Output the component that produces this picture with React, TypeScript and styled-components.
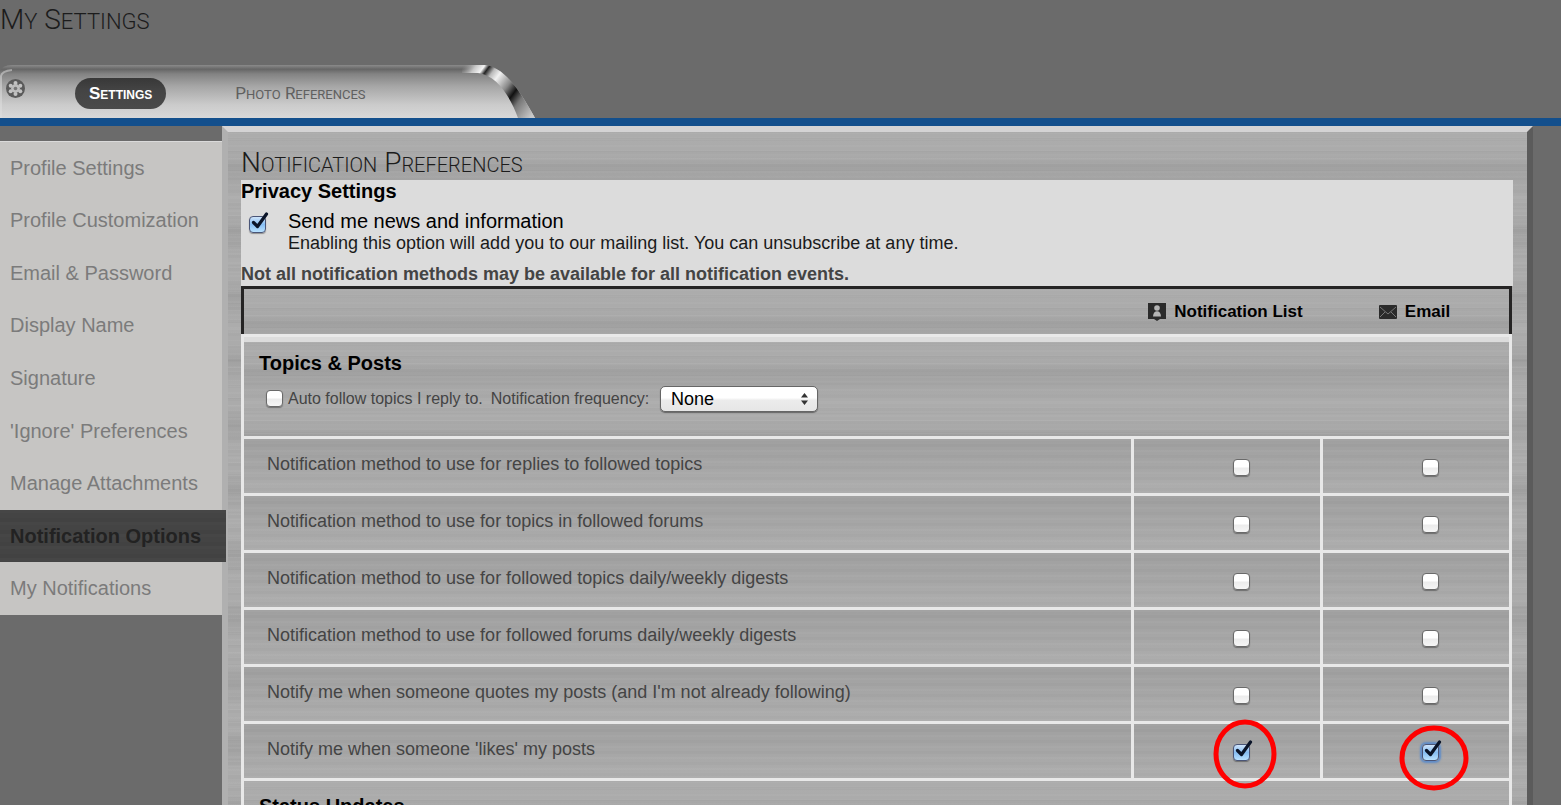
import React from 'react';
import styled, { createGlobalStyle, css } from 'styled-components';

const GlobalStyle = createGlobalStyle`
  *, *::before, *::after { box-sizing: border-box; }
  html, body { margin: 0; height: 100%; overflow: hidden; }
  body { background: #6b6b6b; font-family: "Liberation Sans", Arial, sans-serif; color: #444; }
  h1, h2, h3, p { margin: 0; }
`;

const brushed = css`
  background-color: #a8a8a8;
  background-image:
    repeating-linear-gradient(180deg, rgba(255,255,255,0.03) 0 2px, transparent 2px 5px, rgba(255,255,255,0.02) 5px 6px, rgba(0,0,0,0.02) 6px 9px, transparent 9px 13px),
    repeating-linear-gradient(180deg, rgba(0,0,0,0.02) 0 1px, transparent 1px 7px, rgba(255,255,255,0.04) 7px 8px, transparent 8px 19px),
    repeating-linear-gradient(180deg, rgba(255,255,255,0.05) 0, rgba(255,255,255,0.03) 22px, rgba(0,0,0,0.04) 36px, rgba(255,255,255,0.05) 64px);
`;

const rowBrushed = css`
  background-color: #a8a8a8;
  background-image:
    repeating-linear-gradient(180deg, rgba(255,255,255,0.03) 0 2px, transparent 2px 5px, rgba(0,0,0,0.02) 5px 8px, transparent 8px 11px),
    linear-gradient(180deg, rgba(0,0,0,0.05), rgba(0,0,0,0.01) 50%, rgba(255,255,255,0.07));
`;

const Page = styled.div`
  min-height: 100vh;
`;

const PageHeader = styled.header`
  height: 65px;
`;

const lightCaps = css`
  font-family: Roboto, "Liberation Sans", sans-serif;
  font-weight: 300;
  text-transform: uppercase;
`;

const SmallLetters = styled.span<{ $size: number }>`
  font-size: ${p => p.$size}px;
  line-height: 1;
`;

function Caps({ text, small }: { text: string; small: number }) {
  return (
    <>
      {text.split(' ').map((word, i) => (
        <React.Fragment key={word}>
          {i > 0 && ' '}
          {word[0]}<SmallLetters $size={small}>{word.slice(1)}</SmallLetters>
        </React.Fragment>
      ))}
    </>
  );
}

const PageTitle = styled.h1`
  ${lightCaps}
  font-size: 28px;
  line-height: 40px;
  color: #1c1c1c;
`;

const TabBar = styled.nav`
  position: relative;
  display: flex;
  align-items: center;
  height: 61px;
  padding: 4px 0 0 5px;
  border-bottom: 8px solid #134f8c;
`;

const TabPlate = styled.svg`
  position: absolute;
  left: 0;
  bottom: 0;
`;

const Emblem = styled.svg`
  position: relative;
  margin: 0 49px 11px 0;
`;

const Tab = styled.a<{ $active?: boolean }>`
  position: relative;
  height: 31px;
  padding: 0 14px;
  border-radius: 16px;
  font-size: 17px;
  line-height: 31px;
  margin-right: 55px;
  text-decoration: none;
  ${p => p.$active ? css`
    color: #fff;
    font-weight: 700;
    font-variant: small-caps;
    background: linear-gradient(#383838, #444 40%, #4a4a4a);
  ` : css`
    ${lightCaps}
    font-weight: 400;
    color: #606060;
  `}
`;

const Body = styled.div`
  display: flex;
  align-items: flex-start;
  padding-right: 28px;
`;

const SideMenu = styled.nav`
  flex: 0 0 222px;
  display: grid;
  grid-auto-rows: 1fr;
  height: 474px;
  margin-top: 15px;
  background: #c6c5c3;
  border-top: 1px solid #dadada;
  position: relative;
`;

const SideLink = styled.a<{ $active?: boolean }>`
  display: flex;
  align-items: center;
  padding: 0 0 0 10px;
  font-size: 20px;
  text-decoration: none;
  color: #7b7b7b;
  ${p => p.$active && css`
    margin-right: -4px;
    color: #222;
    font-weight: 700;
    background: repeating-linear-gradient(#464646 0 3px, #444 3px 8px, #424242 8px 12px);
  `}
`;

const Panel = styled.main`
  flex: 1;
  border: 6px solid;
  border-color: #d4d3d4 #5b5b5b #5b5b5b #b0b0b0;
  padding: 14px 14px 14px 13px;
  min-height: 100vh;
  ${brushed}
`;

const PanelTitle = styled.h2`
  ${lightCaps}
  font-size: 28px;
  line-height: 34px;
  color: #1c1c1c;
`;

const Privacy = styled.section`
  height: 106px;
  background: #dcdcdc;
`;

const PrivacyTitle = styled.h3`
  font-size: 20px;
  line-height: 22px;
  color: #000;
`;

const NewsOption = styled.div`
  display: flex;
  align-items: center;
  padding: 8px 0 0 8px;
`;

const NewsText = styled.div`
  padding-left: 21px;
  font-size: 18px;
  line-height: 22px;
  color: #1a1a1a;
`;

const NewsLabel = styled.label`
  display: block;
  font-size: 20px;
  color: #000;
`;

const NewsCheck = styled.div`
  align-self: flex-start;
  padding-top: 5px;
`;

const Notice = styled.p`
  padding-top: 10px;
  font-size: 18px;
  line-height: 20px;
  font-weight: 700;
  color: #444;
`;

const OptionTable = styled.table`
  width: calc(100% - 1px);
  table-layout: fixed;
  border-collapse: separate;
  border-spacing: 0;
`;

const LabelCol = styled.col``;
const ListCol = styled.col`width: 189px;`;
const EmailCol = styled.col`width: 192px;`;

const HeadCell = styled.th`
  height: 48px;
  padding: 0;
  border-top: 3px solid #252424;
  font-size: 17px;
  color: #000;
  ${brushed}
  &:first-child { border-left: 3px solid #252424; }
  &:last-child { border-right: 3px solid #252424; }
`;

const HeadLabel = styled.span`
  display: flex;
  align-items: center;
  justify-content: center;
  gap: 8px;
`;

const SectionCell = styled.td<{ $first?: boolean }>`
  height: ${p => (p.$first ? 105 : 97)}px;
  padding: ${p => (p.$first ? 15 : 14)}px 15px 0;
  vertical-align: top;
  border: 3px solid #e8e8e8;
  border-top-width: ${p => (p.$first ? 3 : 0)}px;
  ${brushed}
  ${p => p.$first && 'box-shadow: inset 0 5px #dcdcdc;'}
`;

const SectionTitle = styled.h3`
  font-size: 20px;
  line-height: 22px;
  color: #000;
`;

const AutoFollow = styled.div`
  display: flex;
  align-items: center;
  padding: 12px 0 0 7px;
  font-size: 16px;
  color: #444;
`;

const FollowLabel = styled.label`
  margin: 0 8px 0 4px;
`;

const FrequencyBox = styled.span`
  position: relative;
  margin-left: 11px;
`;

const Frequency = styled.select`
  appearance: none;
  display: block;
  width: 158px;
  height: 26px;
  padding: 0 10px;
  border: 1px solid #666;
  border-radius: 5px;
  background: linear-gradient(#fff 0 45%, #ececec 55%, #e6e6e6);
  box-shadow: 0 1px 1px rgba(0,0,0,0.4);
  font: 18px "Liberation Sans", sans-serif;
  color: #000;
`;

const Arrows = styled.svg`
  position: absolute;
  right: 10px;
  top: 7px;
  pointer-events: none;
`;

const RowLabel = styled.th`
  height: 57px;
  padding: 0 0 3px 23px;
  border: solid #e8e8e8;
  border-width: 0 0 3px 3px;
  text-align: left;
  font-size: 18px;
  font-weight: 400;
  color: #444;
  ${rowBrushed}
`;

const CheckCell = styled.td`
  padding: 4px 0 0 30px;
  border: solid #e8e8e8;
  border-width: 0 0 3px 3px;
  text-align: center;
  ${rowBrushed}
  &:last-child { border-right-width: 3px; }
`;

const CheckWrap = styled.span`
  position: relative;
  display: inline-block;
  vertical-align: middle;
  width: 18px;
  height: 18px;
`;

const CheckInput = styled.input<{ $glow?: boolean }>`
  appearance: none;
  display: block;
  width: 17px;
  height: 17px;
  margin: 0;
  border: 1px solid #6a6a6a;
  border-radius: 4px;
  background: linear-gradient(#fff, #fff 45%, #ececec 55%, #f6f6f6);
  box-shadow: 0 1px 1px rgba(0,0,0,0.35);
  &:checked {
    border-color: #4a5577;
    background: linear-gradient(#cfe4fa, #86bdf2 50%, #b9e2ff);
  }
  ${p => p.$glow && css`box-shadow: 0 0 2px 2px #5e8cc9;`}
  &:checked + svg { display: block; }
`;

const Tick = styled.svg`
  display: none;
  position: absolute;
  left: 0;
  top: -4px;
  pointer-events: none;
`;

const Marker = styled.svg`
  position: absolute;
  pointer-events: none;
  z-index: 1;
`;

const LeftMarker = styled(Marker)`left: -20px; top: -25px;`;
const RightMarker = styled(Marker)`left: -23px; top: -20px;`;

type CheckProps = { id?: string; label?: string; checked?: boolean; glow?: boolean; children?: React.ReactNode };

function Check({ id, label, checked, glow, children }: CheckProps) {
  return (
    <CheckWrap>
      <CheckInput id={id} type="checkbox" aria-label={label} defaultChecked={checked} $glow={glow} />
      <Tick width="20" height="20" viewBox="0 0 20 20">
        <path d="M4.5 10.5 L8.5 14.5 L17.5 2" fill="none" stroke="#0a1428" strokeWidth="3.2" strokeLinejoin="round" strokeLinecap="round" />
      </Tick>
      {children}
    </CheckWrap>
  );
}

const sideItems = [
  'Profile Settings', 'Profile Customization', 'Email & Password', 'Display Name', 'Signature',
  "'Ignore' Preferences", 'Manage Attachments', 'Notification Options', 'My Notifications',
];

const rows = [
  'Notification method to use for replies to followed topics',
  'Notification method to use for topics in followed forums',
  'Notification method to use for followed topics daily/weekly digests',
  'Notification method to use for followed forums daily/weekly digests',
  "Notify me when someone quotes my posts (and I'm not already following)",
  "Notify me when someone 'likes' my posts",
];

export default function App() {
  return (
    <Page>
      <GlobalStyle />
      <PageHeader><PageTitle><Caps text="My Settings" small={22} /></PageTitle></PageHeader>
      <TabBar>
        <TabPlate width="536" height="54" viewBox="0 0 536 54" aria-hidden="true">
          <defs>
            <linearGradient id="plate" x1="0" y1="0" x2="0" y2="1">
              <stop offset="0" stopColor="#8a8a8a" />
              <stop offset="0.08" stopColor="#666" />
              <stop offset="0.17" stopColor="#838383" />
              <stop offset="0.4" stopColor="#a6a6a6" />
              <stop offset="0.75" stopColor="#cbcbcb" />
              <stop offset="1" stopColor="#d8d8d8" />
            </linearGradient>
            <linearGradient id="chrome" gradientUnits="userSpaceOnUse" x1="462" y1="4" x2="530" y2="54">
              <stop offset="0" stopColor="#999" stopOpacity="0" />
              <stop offset="0.12" stopColor="#c8c8c8" />
              <stop offset="0.2" stopColor="#f4f4f4" />
              <stop offset="0.25" stopColor="#222" />
              <stop offset="0.32" stopColor="#bbb" />
              <stop offset="0.4" stopColor="#f2f2f2" />
              <stop offset="0.56" stopColor="#888" />
              <stop offset="0.67" stopColor="#111" />
              <stop offset="0.78" stopColor="#777" />
              <stop offset="1" stopColor="#c8c8c8" />
            </linearGradient>
          </defs>
          <path d="M0 8 Q2 1 12 1 H484 C504 2 520 27 535 54 H0 Z" fill="url(#plate)" />
          <path d="M462 1 H484 C504 2 520 27 535 54 H518 C511 34 497 11 478 9 H462 Z" fill="url(#chrome)" />
          <path d="M1 54 V12 Q2 7 12 6" fill="none" stroke="#e0e0e0" strokeWidth="2" opacity="0.5" />
        </TabPlate>
        <Emblem width="21" height="21" viewBox="0 0 21 21" aria-hidden="true">
          <circle cx="10.5" cy="10.5" r="9.5" fill="#5a5a5a" />
          <g fill="#c2c2c2">
            <circle cx="10.5" cy="5" r="2" />
            <circle cx="15.3" cy="7.7" r="2" />
            <circle cx="15.3" cy="13.3" r="2" />
            <circle cx="10.5" cy="16" r="2" />
            <circle cx="5.7" cy="13.3" r="2" />
            <circle cx="5.7" cy="7.7" r="2" />
          </g>
          <circle cx="10.5" cy="10.5" r="4.4" fill="#bdbdbd" />
          <circle cx="10.5" cy="10.5" r="1.8" fill="#777" />
        </Emblem>
        <Tab href="#settings" $active>Settings</Tab>
        <Tab href="#photos"><Caps text="Photo References" small={13} /></Tab>
      </TabBar>
      <Body>
        <SideMenu>
          {sideItems.map(s => <SideLink key={s} href="#" $active={s === 'Notification Options'}>{s}</SideLink>)}
        </SideMenu>
        <Panel>
          <PanelTitle><Caps text="Notification Preferences" small={20} /></PanelTitle>
          <Privacy>
            <PrivacyTitle>Privacy Settings</PrivacyTitle>
            <NewsOption>
              <NewsCheck><Check id="news" checked /></NewsCheck>
              <NewsText>
                <NewsLabel htmlFor="news">Send me news and information</NewsLabel>
                Enabling this option will add you to our mailing list. You can unsubscribe at any time.
              </NewsText>
            </NewsOption>
            <Notice>Not all notification methods may be available for all notification events.</Notice>
          </Privacy>
          <OptionTable>
            <colgroup><LabelCol /><ListCol /><EmailCol /></colgroup>
            <thead>
              <tr>
                <HeadCell />
                <HeadCell scope="col">
                  <HeadLabel>
                    <svg width="18" height="18" viewBox="0 0 18 18" aria-hidden="true">
                      <path d="M0 0 H18 V16 H12 L9 18 L6 16 H0 Z" fill="#2b2b2b" />
                      <circle cx="9" cy="5" r="2.8" fill="#b5b5b5" />
                      <path d="M5 13.5 C5 6.5 13 6.5 13 13.5 Z" fill="#b5b5b5" />
                    </svg>
                    Notification List
                  </HeadLabel>
                </HeadCell>
                <HeadCell scope="col">
                  <HeadLabel>
                    <svg width="18" height="14" viewBox="0 0 18 14" aria-hidden="true">
                      <rect width="18" height="14" rx="1" fill="#2b2b2b" />
                      <path d="M1 2 L9 9 L17 2 M1 12 L6 7 M17 12 L12 7" fill="none" stroke="#777" />
                    </svg>
                    Email
                  </HeadLabel>
                </HeadCell>
              </tr>
            </thead>
            <tbody>
              <tr>
                <SectionCell colSpan={3} $first>
                  <SectionTitle>Topics &amp; Posts</SectionTitle>
                  <AutoFollow>
                    <Check id="follow" />
                    <FollowLabel htmlFor="follow">Auto follow topics I reply to.</FollowLabel>
                    <label htmlFor="frequency">Notification frequency:</label>
                    <FrequencyBox>
                      <Frequency id="frequency" defaultValue="None">
                        <option>None</option>
                        <option>Daily</option>
                        <option>Weekly</option>
                      </Frequency>
                      <Arrows width="7" height="12" viewBox="0 0 7 12">
                        <path d="M0 4.5 L3.5 0 L7 4.5 Z M0 7.5 L3.5 12 L7 7.5 Z" fill="#333" />
                      </Arrows>
                    </FrequencyBox>
                  </AutoFollow>
                </SectionCell>
              </tr>
              {rows.map((r, i) => {
                const on = i === rows.length - 1;
                return (
                  <tr key={r}>
                    <RowLabel scope="row">{r}</RowLabel>
                    <CheckCell>
                      <Check label={`${r}: Notification List`} checked={on}>
                        {on && (
                          <LeftMarker width="64" height="70" viewBox="0 0 64 70">
                            <ellipse cx="32" cy="35" rx="29" ry="32" fill="none" stroke="#f00" strokeWidth="5" />
                          </LeftMarker>
                        )}
                      </Check>
                    </CheckCell>
                    <CheckCell>
                      <Check label={`${r}: Email`} checked={on} glow={on}>
                        {on && (
                          <RightMarker width="70" height="68" viewBox="0 0 70 68">
                            <ellipse cx="35" cy="34" rx="32" ry="30" fill="none" stroke="#f00" strokeWidth="5" />
                          </RightMarker>
                        )}
                      </Check>
                    </CheckCell>
                  </tr>
                );
              })}
              <tr>
                <SectionCell colSpan={3}><SectionTitle>Status Updates</SectionTitle></SectionCell>
              </tr>
            </tbody>
          </OptionTable>
        </Panel>
      </Body>
    </Page>
  );
}
